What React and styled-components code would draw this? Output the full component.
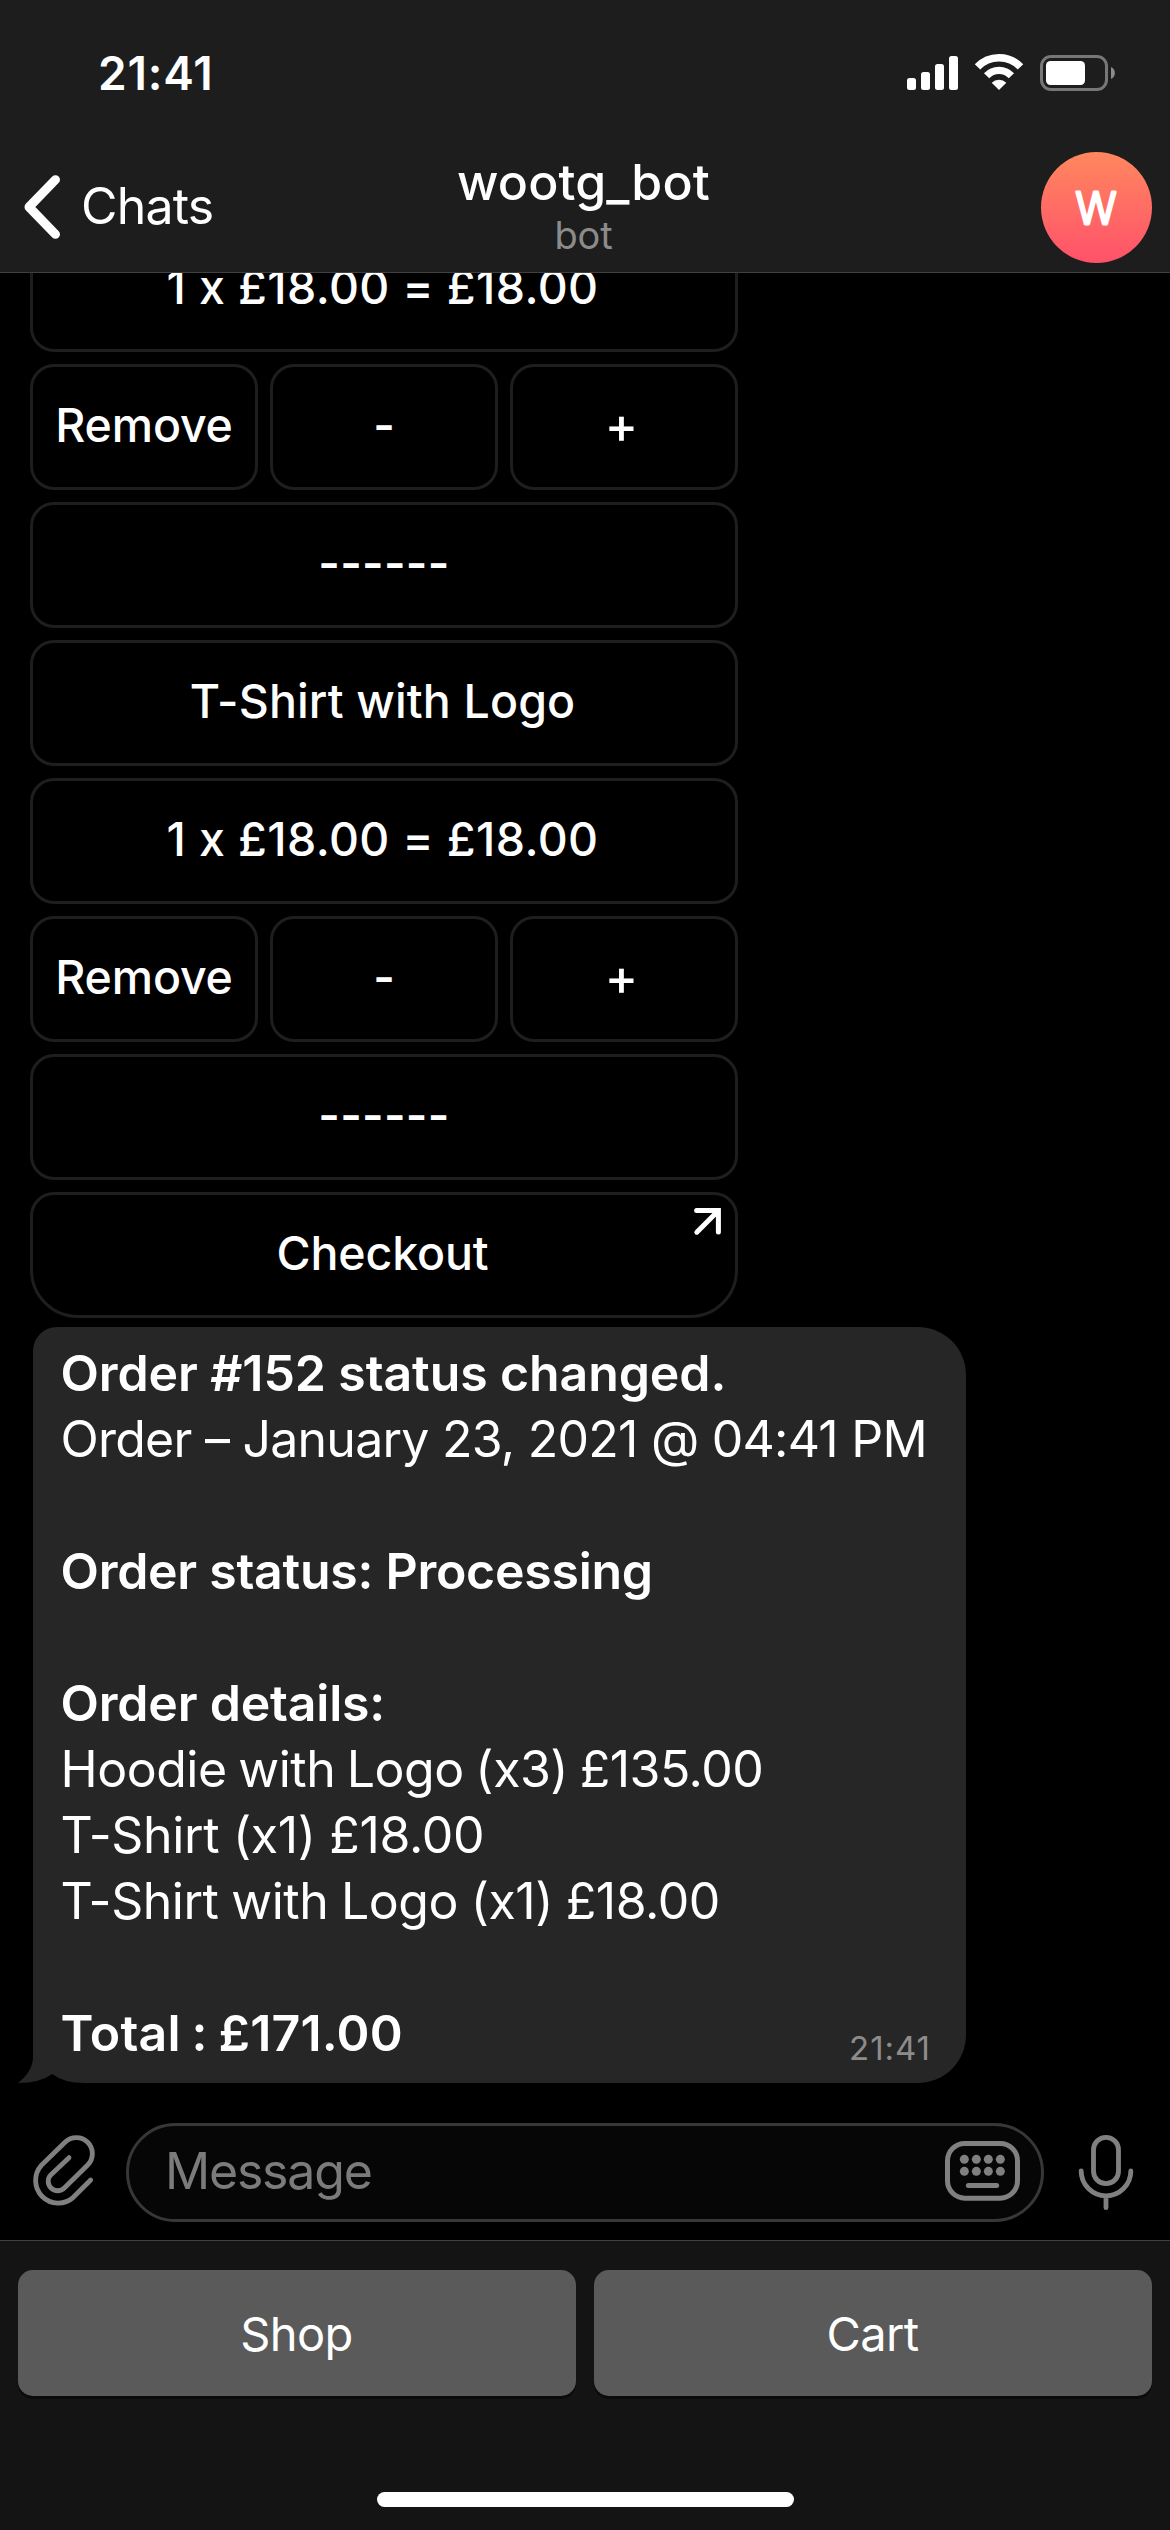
import React from "react";
import styled, { createGlobalStyle } from "styled-components";

const Global = createGlobalStyle`
  * { box-sizing: border-box; }
  html, body { margin: 0; padding: 0; background: #000; }
  body { font-family: Inter, "Liberation Sans", sans-serif; color: #fff; }
`;

const Screen = styled.div`
  width: 1170px;
  height: 2530px;
  display: flex;
  flex-direction: column;
  background: #000;
  overflow: hidden;
`;

const Header = styled.header`
  flex: none;
  height: 273px;
  background: #1d1d1d;
  border-bottom: 1px solid #404040;
`;

const StatusBar = styled.div`
  display: flex;
  justify-content: space-between;
  align-items: center;
  height: 146px;
  padding: 0 55px 0 98px;
`;

const Clock = styled.span`
  font-size: 46px;
  font-weight: 600;
  line-height: 60px;
  letter-spacing: 0.8px;
`;

const NavBar = styled.nav`
  display: grid;
  grid-template-columns: 1fr auto 1fr;
  align-items: center;
  height: 123px;
  padding: 0 18px;
`;

const Back = styled.div`
  display: flex;
  align-items: center;
  gap: 20px;
  padding: 0 0 2px 6px;
  font-size: 50px;
  letter-spacing: -0.8px;
`;

const BackLabel = styled.span`
  padding-bottom: 2px;
  line-height: 60px;
`;

const Heading = styled.div`
  display: flex;
  flex-direction: column;
  align-items: center;
  padding: 0 3px 7px 0;
`;

const Title = styled.div`
  font-size: 50px;
  font-weight: 530;
  line-height: 60px;
  letter-spacing: 0.15px;
`;

const Subtitle = styled.div`
  margin-top: 1px;
  font-size: 38px;
  line-height: 44px;
  letter-spacing: -0.2px;
  color: #8b8b8b;
`;

const Avatar = styled.div`
  justify-self: end;
  width: 111px;
  height: 111px;
  border-radius: 50%;
  background: linear-gradient(#ff885e, #ff516a);
`;

const Chat = styled.main`
  flex: none;
  height: 1850px;
  display: flex;
  flex-direction: column;
  justify-content: flex-end;
  padding: 0 0 40px 30px;
  overflow: hidden;
`;

const Keyboard = styled.div`
  flex: none;
  width: 708px;
  display: flex;
  flex-direction: column;
  gap: 12px;
  margin-bottom: 9px;
`;

const KeyRow = styled.div`
  display: grid;
  grid-auto-flow: column;
  grid-auto-columns: minmax(0, 1fr);
  gap: 12px;
`;

const Key = styled.div`
  position: relative;
  height: 126px;
  display: flex;
  align-items: center;
  justify-content: center;
  padding: 0 ${(p) => p.$trim || 0}px 4px 0;
  border: 3px solid #1e1e1e;
  border-radius: ${(p) => (p.$last ? "24px 24px 48px 48px" : "24px")};
  font-size: ${(p) => p.$size || 46.5}px;
  font-weight: ${(p) => p.$weight || 500};
  letter-spacing: ${(p) => p.$ls || 0}px;
  white-space: pre;
`;

const LinkMark = styled.svg`
  position: absolute;
  top: 12px;
  right: 13px;
`;

const Bubble = styled.section`
  position: relative;
  flex: none;
  width: 933px;
  height: 756px;
  margin-left: 3px;
  padding: 13px 30px 0 27.5px;
  background: #262626;
  border-radius: 24px 48px 48px 0;
`;

const Tail = styled.svg`
  position: absolute;
  left: -15px;
  bottom: 0;
`;

const Line = styled.p`
  margin: 0;
  height: 66px;
  font-size: 50px;
  line-height: 66px;
  font-weight: ${(p) => (p.$strong ? 600 : 400)};
  letter-spacing: ${(p) => p.$ls || 0}px;
  word-spacing: ${(p) => p.$ws || 0}px;
  white-space: pre;
`;

const Stamp = styled.time`
  position: absolute;
  right: 35px;
  bottom: 13px;
  font-size: 33px;
  line-height: 44px;
  color: #8c8c8c;
  letter-spacing: 0.95px;
`;

const Composer = styled.div`
  flex: none;
  height: 117px;
  display: flex;
  align-items: flex-start;
  padding-left: 30px;
`;

const Field = styled.div`
  width: 918px;
  height: 99px;
  margin: 0 32px 0 28px;
  padding: 0 20px 3px 36px;
  display: flex;
  align-items: center;
  justify-content: space-between;
  border: 3px solid #373737;
  border-radius: 50px;
  background: #060606;
  color: #7b7b7b;
  font-size: 50px;
  letter-spacing: -1.2px;
`;

const ToolIcon = styled.svg`
  flex: none;
  margin-top: 9px;
`;

const Panel = styled.footer`
  flex: 1;
  display: flex;
  flex-direction: column;
  align-items: center;
  background: #141414;
  border-top: 1px solid #404040;
  padding: 29px 18px 0;
`;

const Replies = styled.div`
  align-self: stretch;
  display: grid;
  grid-template-columns: 1fr 1fr;
  gap: 18px;
`;

const Reply = styled.div`
  height: 126px;
  display: flex;
  align-items: center;
  justify-content: center;
  padding-right: 1px;
  background: #5a5a5a;
  border-radius: 15px;
  box-shadow: 0 3px 0 #0b0b0b;
  font-size: 47px;
  letter-spacing: -0.6px;
`;

const HomeBar = styled.div`
  width: 417px;
  height: 15px;
  margin-top: 96px;
  border-radius: 8px;
  background: #fff;
`;

const StatusIcons = () => (
  <svg width="208" height="40" viewBox="907 53 208 40" fill="#fff">
    <rect x="907" y="78" width="9" height="12" rx="2.5" />
    <rect x="921" y="72" width="9" height="18" rx="2.5" />
    <rect x="935" y="64" width="9" height="26" rx="2.5" />
    <rect x="949" y="56" width="9" height="34" rx="2.5" />
    <g fill="none" stroke="#fff">
      <path d="M977.5 66.8A30 30 0 0 1 1020.5 66.8" strokeWidth="7.6" />
      <path d="M986.6 75.7A17 17 0 0 1 1011.4 75.7" strokeWidth="7.2" />
    </g>
    <path d="M999 90L991.7 82.7A10.3 10.3 0 0 1 1006.3 82.7Z" />
    <rect x="1041.5" y="56.5" width="65" height="33" rx="9.5" fill="none" stroke="#777" strokeWidth="3" />
    <rect x="1046" y="61" width="39" height="24" rx="4.5" />
    <path d="M1111 67A6.6 6.6 0 0 1 1111 79Z" fill="#8a8a8a" />
  </svg>
);

const price = { t: "1 x £18.00 = £18.00", ls: 0.4, trim: 3 };
const quantity = [
  { t: "Remove", ls: -0.15 },
  { t: "-", weight: 600 },
  { t: "+", size: 50, weight: 500, trim: 5 },
];
const divider = { t: "------", weight: 600, ls: 0.24 };

const keys = [
  [price],
  quantity,
  [divider],
  [{ t: "T-Shirt with Logo", ls: 0.14, trim: 3 }],
  [price],
  quantity,
  [divider],
  [{ t: "Checkout", ls: -0.12, trim: 3, link: true }],
];

const lines = [
  { t: "Order #152 status changed.", b: true, ls: -0.1 },
  { t: "Order – January 23, 2021 @ 04:41 PM", ls: -0.75 },
  { t: "" },
  { t: "Order status: Processing", b: true, ls: -0.27 },
  { t: "" },
  { t: "Order details:", b: true, ls: -0.2 },
  { t: "Hoodie with Logo (x3) £135.00", ls: -0.48, ws: -2 },
  { t: "T-Shirt (x1) £18.00", ls: -0.36 },
  { t: "T-Shirt with Logo (x1) £18.00", ls: -0.48, ws: -0.8 },
  { t: "" },
  { t: "Total : £171.00", b: true, ls: 0.2, ws: -2 },
];

export default function App() {
  return (
    <Screen>
      <Global />
      <Header>
        <StatusBar>
          <Clock>21:41</Clock>
          <StatusIcons />
        </StatusBar>
        <NavBar>
          <Back>
            <svg width="37" height="64" viewBox="0 0 37 64" fill="none" stroke="#fff" strokeWidth="9" strokeLinecap="round" strokeLinejoin="round">
              <path d="M31.5 4.7L5 32L31.5 59.3" />
            </svg>
            <BackLabel>Chats</BackLabel>
          </Back>
          <Heading>
            <Title>wootg_bot</Title>
            <Subtitle>bot</Subtitle>
          </Heading>
          <Avatar>
            <svg width="111" height="111" viewBox="0 0 111 111">
              <text x="55" y="72.2" textAnchor="middle" textLength="41" lengthAdjust="spacingAndGlyphs" fontSize="44" fontWeight="300" fill="#fff" stroke="#fff" strokeWidth="2.8" strokeLinejoin="round">W</text>
            </svg>
          </Avatar>
        </NavBar>
      </Header>
      <Chat>
        <Keyboard>
          {keys.map((row, i) => (
            <KeyRow key={i}>
              {row.map((k) => (
                <Key key={k.t} $last={k.link} $ls={k.ls} $trim={k.trim} $size={k.size} $weight={k.weight}>
                  {k.t}
                  {k.link && (
                    <LinkMark width="29" height="29" viewBox="0 0 29 29" fill="none" stroke="#fff" strokeWidth="5" strokeLinecap="round">
                      <path d="M3.6 3.6H25.4V25M25 4L3.8 25.2" />
                    </LinkMark>
                  )}
                </Key>
              ))}
            </KeyRow>
          ))}
        </Keyboard>
        <Bubble>
          {lines.map((l, i) => (
            <Line key={i} $strong={l.b} $ls={l.ls} $ws={l.ws}>{l.t}</Line>
          ))}
          <Stamp>21:41</Stamp>
          <Tail width="66" height="30" viewBox="0 30 66 30">
            <path d="M15 34Q15 48 0 60H16V34Z" fill="#262626" />
            <path d="M66 60.5V60Q46 60 34.3 51Q22 60 0 60V60.5Z" fill="#000" />
          </Tail>
        </Bubble>
      </Chat>
      <Composer>
        <ToolIcon width="68" height="80" viewBox="90 696 204 240" fill="none" stroke="#808080" strokeWidth="14.5" strokeLinecap="round">
          <path d="M272 840L220 892A68 68 0 0 1 124 796L195 727A48 48 0 0 1 263 795L193 864A28 28 0 0 1 153 824L207 773" />
        </ToolIcon>
        <Field>
          Message
          <svg width="77" height="62" viewBox="432 540 231 186" fill="none" stroke="#808080" strokeWidth="15" strokeLinecap="round">
            <rect x="442.5" y="550.5" width="210" height="164" rx="52" />
            <path d="M505 676.5H590" />
            <g fill="#808080" stroke="none">
              {[493, 529, 565, 601].map((x) => (
                <React.Fragment key={x}>
                  <circle cx={x} cy="598" r="13.5" />
                  <circle cx={x} cy="634" r="13.5" />
                </React.Fragment>
              ))}
            </g>
          </svg>
        </Field>
        <ToolIcon width="60" height="80" viewBox="828 516 180 240" fill="none" stroke="#808080" strokeWidth="14.5" strokeLinecap="round">
          <rect x="880.5" y="532" width="75" height="139" rx="37.5" />
          <path d="M843.5 633A74.5 74.5 0 0 0 992.5 633M918 708V743" />
        </ToolIcon>
      </Composer>
      <Panel>
        <Replies>
          <Reply>Shop</Reply>
          <Reply>Cart</Reply>
        </Replies>
        <HomeBar />
      </Panel>
    </Screen>
  );
}
